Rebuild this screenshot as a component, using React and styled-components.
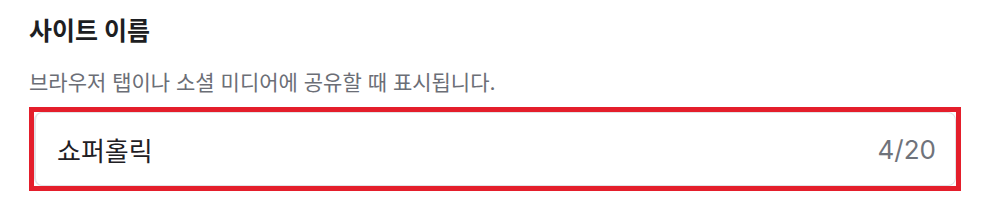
import React from "react";
import styled, { createGlobalStyle } from "styled-components";

const Global = createGlobalStyle`
  html, body { margin: 0; padding: 0; background: #ffffff; }
  body { font-family: Inter, "Noto Sans CJK KR", "Noto Sans", sans-serif; }
`;

const Section = styled.section`
  display: flex;
  flex-direction: column;
  padding: 13px 31px 0 29px;
  width: 932px;
`;

const Title = styled.h2`
  margin: 0;
  font-size: 25px;
  font-weight: 700;
  line-height: 36px;
  color: #1d1e22;
`;

const Description = styled.p`
  margin: 20px 0 0;
  font-size: 21px;
  line-height: 28px;
  color: #6b6e76;
`;

const Highlight = styled.div`
  margin-top: 10px;
  border: 5px solid #e41e2b;
  box-sizing: border-box;
  height: 84px;
  display: flex;
`;

const Field = styled.div`
  flex: 1;
  display: flex;
  align-items: center;
  justify-content: space-between;
  border: 1px solid #e2e3e7;
  border-left-width: 2px;
  border-radius: 8px;
  padding: 0 19px 0 21px;
  background: #fff;
`;

const Value = styled.span`
  font-size: 26px;
  color: #1f2024;
`;

const Counter = styled.span`
  font-size: 26px;
  color: #6f737b;
`;

export default function App() {
  return (
    <>
      <Global />
      <Section>
        <Title>사이트 이름</Title>
        <Description>브라우저 탭이나 소셜 미디어에 공유할 때 표시됩니다.</Description>
        <Highlight>
          <Field>
            <Value>쇼퍼홀릭</Value>
            <Counter>4/20</Counter>
          </Field>
        </Highlight>
      </Section>
    </>
  );
}
